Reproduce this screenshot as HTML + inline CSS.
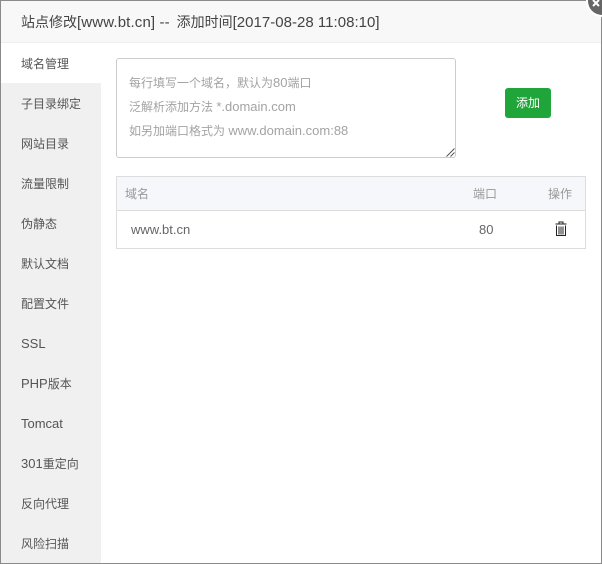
<!DOCTYPE html>
<html lang="zh-CN">
<head>
<meta charset="utf-8">
<title>站点修改</title>
<style>
html,body{margin:0;padding:0;background:#fff}
body{width:602px;height:564px;position:relative;overflow:hidden;font-family:"Liberation Sans","Noto Sans CJK SC",sans-serif;color:#555}
.abs{position:absolute;white-space:nowrap}
.l{font-size:13px}
.t{font-size:15px;letter-spacing:.14px}
.t2{font-size:15px;letter-spacing:.02px}
#frameT{left:0;top:0;width:602px;height:1px;background:#8a8a8a}
#frameL{left:0;top:0;width:1px;height:564px;background:#8a8a8a}
#frameR{left:601px;top:0;width:1px;height:564px;background:#8a8a8a}
#frameB{left:0;top:563px;width:602px;height:1px;background:#8a8a8a}
#head{left:1px;top:1px;width:600px;height:41px;background:#f8f8f8;border-bottom:1px solid #eee}
#title{left:21px;top:12px;font-size:14px;line-height:20px;color:#444}
#side{left:1px;top:83px;width:100px;height:480px;background:#f0f0f0}
.nav{left:21px;font-size:12px;line-height:20px;color:#555}
#ta{left:116px;top:58px;width:338px;height:98px;border:1px solid #ccc;border-radius:3px;background:#fff}
.ph{left:129px;font-size:12px;line-height:24px;color:#a3a3a3}
#btn{left:505px;top:88px;width:46px;height:30px;background:#20a53a;border-radius:3px;color:#fff;font-size:12px;line-height:30px;text-align:center}
#table{left:116px;top:176px;width:468px;height:71px;border:1px solid #ddd;background:#fff}
#thead{left:0;top:0;width:468px;height:33px;background:#f6f7fb;border-bottom:1px solid #ddd}
.th{font-size:12px;line-height:20px;color:#999}
.td{font-size:13px;line-height:20px;color:#666}
</style>
</head>
<body>
<div class="abs" id="head"></div>
<div class="abs" id="title">站点修改<span class="t">[www.bt.cn] -- </span><span style="margin-left:2.5px">添加时间</span><span class="t2">[2017-08-28 11:08:10]</span></div>

<div class="abs" id="side"></div>
<div class="abs nav" style="top:54px">域名管理</div>
<div class="abs nav" style="top:94px">子目录绑定</div>
<div class="abs nav" style="top:134px">网站目录</div>
<div class="abs nav" style="top:174px">流量限制</div>
<div class="abs nav" style="top:214px">伪静态</div>
<div class="abs nav" style="top:254px">默认文档</div>
<div class="abs nav" style="top:294px">配置文件</div>
<div class="abs nav" style="top:334px"><span class="l">SSL</span></div>
<div class="abs nav" style="top:374px"><span class="l">PHP</span>版本</div>
<div class="abs nav" style="top:414px"><span class="l">Tomcat</span></div>
<div class="abs nav" style="top:454px"><span class="l">301</span>重定向</div>
<div class="abs nav" style="top:494px">反向代理</div>
<div class="abs nav" style="top:534px">风险扫描</div>

<div class="abs" id="ta"></div>
<div class="abs ph" style="top:71px">每行填写一个域名，默认为<span class="l">80</span>端口</div>
<div class="abs ph" style="top:95px">泛解析添加方法 <span class="l">*.domain.com</span></div>
<div class="abs ph" style="top:119px">如另加端口格式为 <span class="l">www.domain.com:88</span></div>
<svg class="abs" style="left:445px;top:147px" width="11" height="10" viewBox="0 0 11 10"><path d="M1.5 9.5L9.5 1.5M5.5 9.5L9.5 5.5" stroke="#555" stroke-width="1" fill="none"/></svg>

<div class="abs" id="btn">添加</div>

<div class="abs" id="table">
  <div class="abs" id="thead"></div>
  <div class="abs th" style="left:8px;top:7px">域名</div>
  <div class="abs th" style="left:356px;top:7px">端口</div>
  <div class="abs th" style="left:431px;top:7px">操作</div>
  <div class="abs td" style="left:14px;top:43px">www.bt.cn</div>
  <div class="abs td" style="left:362px;top:43px">80</div>
  <svg class="abs" style="left:437px;top:44px" width="14" height="15" viewBox="0 0 14 15"><path d="M5 2.5V1h4v1.5M1.5 3h11" stroke="#222" stroke-width="1" fill="none"/><path d="M2.5 4.5V14.5h9V4.5" stroke="#222" stroke-width="1" fill="none"/><path d="M5 5.5v8M7 5.5v8M9 5.5v8" stroke="#222" stroke-width="1" fill="none"/></svg>
</div>

<div class="abs" id="frameT"></div>
<div class="abs" id="frameL"></div>
<div class="abs" id="frameR"></div>
<div class="abs" id="frameB"></div>

<svg class="abs" style="left:582px;top:0" width="20" height="18" viewBox="0 0 20 18"><circle cx="20" cy="1" r="16" fill="#fff"/><circle cx="20" cy="1" r="14" fill="#666"/><path d="M11 0L17 6M17 0L11 6" stroke="#fff" stroke-width="2" fill="none"/></svg>
</body>
</html>
